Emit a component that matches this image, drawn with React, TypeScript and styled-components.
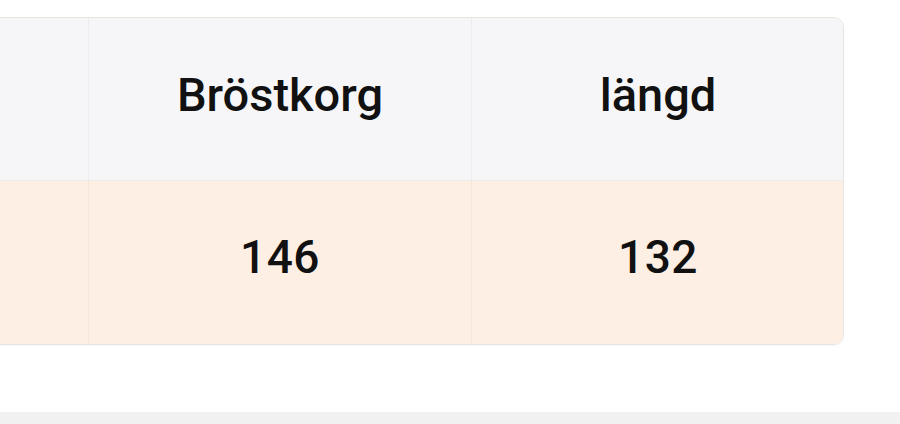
import React from "react";
import styled, { createGlobalStyle } from "styled-components";

const Global = createGlobalStyle`
  html, body { margin: 0; padding: 0; background: #ffffff; }
  body { font-family: Roboto, "Noto Sans", "Liberation Sans", sans-serif; }
  #root { width: 900px; height: 424px; overflow: hidden; }
`;

const Page = styled.div`
  width: 900px;
  height: 424px;
  overflow: hidden;
  display: flex;
  flex-direction: column;
  padding-top: 17px;
  box-sizing: border-box;
  background: #ffffff;
`;

const Table = styled.div`
  margin-left: -40px;
  width: 884px;
  display: grid;
  grid-template-columns: 128px 383px 372px;
  grid-template-rows: 163px 165px;
  border: 1px solid #e9e4df;
  border-radius: 10px;
  overflow: hidden;
  box-sizing: border-box;
  box-shadow: 0 1px 2px rgba(0, 0, 0, 0.04);
`;

const Cell = styled.div<{ $head?: boolean; $last?: boolean }>`
  display: flex;
  align-items: center;
  justify-content: center;
  background: ${(p) => (p.$head ? "#f6f6f8" : "#fdefe3")};
  border-right: ${(p) => (p.$last ? "none" : `1px solid ${p.$head ? "#ededee" : "#f7e5d7"}`)};
  border-bottom: ${(p) => (p.$head ? "1px solid #efebe7" : "none")};
  color: #111111;
  font-weight: 500;
  font-size: ${(p) => (p.$head ? "47px" : "46px")};
  letter-spacing: ${(p) => (p.$head ? "0" : "0.5px")};
  padding-bottom: ${(p) => (p.$head ? "10px" : "14px")};
  box-sizing: border-box;
`;

const BottomStrip = styled.div`
  margin-top: 67px;
  height: 12px;
  background: #f1f1f1;
`;

export default function App() {
  return (
    <>
      <Global />
      <Page>
        <Table>
          <Cell $head />
          <Cell $head>Bröstkorg</Cell>
          <Cell $head $last>längd</Cell>
          <Cell />
          <Cell>146</Cell>
          <Cell $last>132</Cell>
        </Table>
        <BottomStrip />
      </Page>
    </>
  );
}
